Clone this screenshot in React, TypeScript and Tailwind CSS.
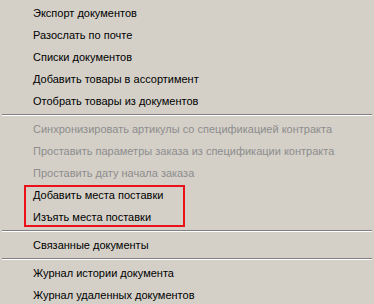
import React from 'react';

type Item = { label: string; disabled?: boolean };

const groups: Item[][] = [
  [
    { label: 'Экспорт документов' },
    { label: 'Разослать по почте' },
    { label: 'Списки документов' },
    { label: 'Добавить товары в ассортимент' },
    { label: 'Отобрать товары из документов' },
  ],
  [
    { label: 'Синхронизировать артикулы со спецификацией контракта', disabled: true },
    { label: 'Проставить параметры заказа из спецификации контракта', disabled: true },
    { label: 'Проставить дату начала заказа', disabled: true },
  ],
];

const Row: React.FC<Item> = ({ label, disabled }) => (
  <div
    className={`h-[22px] flex items-center pl-[33px] whitespace-nowrap ${
      disabled ? 'text-[#8d8d8d]' : 'text-black'
    }`}
  >
    {label}
  </div>
);

const Separator = () => (
  <div className="h-[6px] flex flex-col justify-center px-[2px]">
    <div className="h-px bg-[#808080]" />
    <div className="h-px bg-white" />
  </div>
);

export default function App() {
  return (
    <div
      className="w-[374px] h-[304px] overflow-hidden bg-[#d4d0c8] pt-[2px] text-[11px] leading-none"
      style={{ fontFamily: '"Liberation Sans", Tahoma, Arial, sans-serif' }}
    >
      {groups[0].map((it) => (
        <Row key={it.label} {...it} />
      ))}
      <Separator />
      {groups[1].map((it) => (
        <Row key={it.label} {...it} />
      ))}
      {/* highlighted pair */}
      <div className="relative">
        <Row label="Добавить места поставки" />
        <Row label="Изъять места поставки" />
        <div className="absolute left-[24px] top-[1px] w-[161px] h-[42px] border-2 border-[#ec1019] pointer-events-none" />
      </div>
      <Separator />
      <Row label="Связанные документы" />
      <Separator />
      <Row label="Журнал истории документа" />
      <Row label="Журнал удаленных документов" />
    </div>
  );
}
